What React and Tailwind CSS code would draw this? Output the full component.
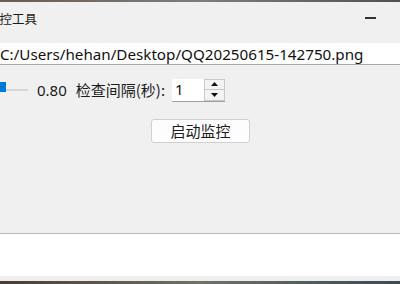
import React from "react";

export default function App() {
  const latin = { fontFamily: '"Noto Sans", "Noto Sans CJK SC", sans-serif' };
  return (
    <div className="w-[400px] h-[284px] overflow-hidden bg-[#f0f0f0] flex flex-col" style={latin}>
      <div className="h-[2px] w-full bg-gradient-to-r from-[#6b5a4e] via-[#7d7f7e] to-[#4f524f]" />
      <div className="h-[41px] flex items-start bg-[#f0f0f0] relative">
        <span className="ml-[-13px] mt-[9px] text-[12.5px] leading-[16px] text-[#1b1b1b]" style={{ fontFamily: '"Noto Sans CJK SC", sans-serif' }}>监控工具</span>
        <div className="absolute left-[365px] top-[15px] w-[11px] h-[1.5px] bg-[#333]" />
      </div>
      <div className="h-[22px] bg-white border-b border-[#a8a8a8] flex items-center">
        <span className="text-[15.2px] leading-[20px] text-[#111] whitespace-nowrap">C:/Users/hehan/Desktop/QQ20250615-142750.png</span>
      </div>
      <div className="h-[13px]" />
      <div className="h-[24px] flex items-center">
        <div className="relative w-[28px] h-[24px]">
          <div className="absolute left-[6px] top-[11px] w-[22px] h-[2px] bg-[#d6d6d6]" />
          <div className="absolute left-0 top-[4px] w-[6px] h-[10px] bg-[#0078d7]" />
        </div>
        <span className="ml-[9px] text-[15px] leading-[20px] text-[#1b1b1b]">0.80</span>
        <span className="ml-[9px] text-[15px] leading-[20px] text-[#1b1b1b]" style={{ fontFamily: '"Noto Sans CJK SC", sans-serif' }}>检查间隔(秒):</span>
        <div className="ml-[7px] flex h-[23px] border-b border-[#a0a0a0]">
          <div className="w-[32px] bg-white flex items-center pl-[3px] text-[15px] text-[#111]">1</div>
          <div className="w-[21px] flex flex-col bg-[#e8e8e8] border border-[#c8c8c8]">
            <div className="flex-1 flex items-center justify-center border-b border-[#c8c8c8] bg-[#f3f3f3]">
              <svg width="7" height="4" viewBox="0 0 7 4"><path d="M0 4 L3.5 0 L7 4Z" fill="#111" /></svg>
            </div>
            <div className="flex-1 flex items-center justify-center bg-[#f3f3f3]">
              <svg width="7" height="4" viewBox="0 0 7 4"><path d="M0 0 L3.5 4 L7 0Z" fill="#111" /></svg>
            </div>
          </div>
        </div>
      </div>
      <div className="h-[17px]" />
      <div className="flex justify-start pl-[151px]">
        <div className="w-[99px] h-[24px] bg-[#fdfdfd] border border-[#d0d0d0] rounded-[3px] flex items-center justify-center text-[15px] text-[#1b1b1b]" style={{ fontFamily: '"Noto Sans CJK SC", sans-serif' }}>启动监控</div>
      </div>
      <div className="flex-1" />
      <div className="h-[1px] bg-[#b9b9b9]" />
      <div className="h-[42px] bg-white" />
      <div className="h-[5px] bg-[#eeeeee]" />
      <div className="h-[3px] w-full bg-gradient-to-r from-[#4a3c38] via-[#6e7268] to-[#3e4a52]" />
    </div>
  );
}
